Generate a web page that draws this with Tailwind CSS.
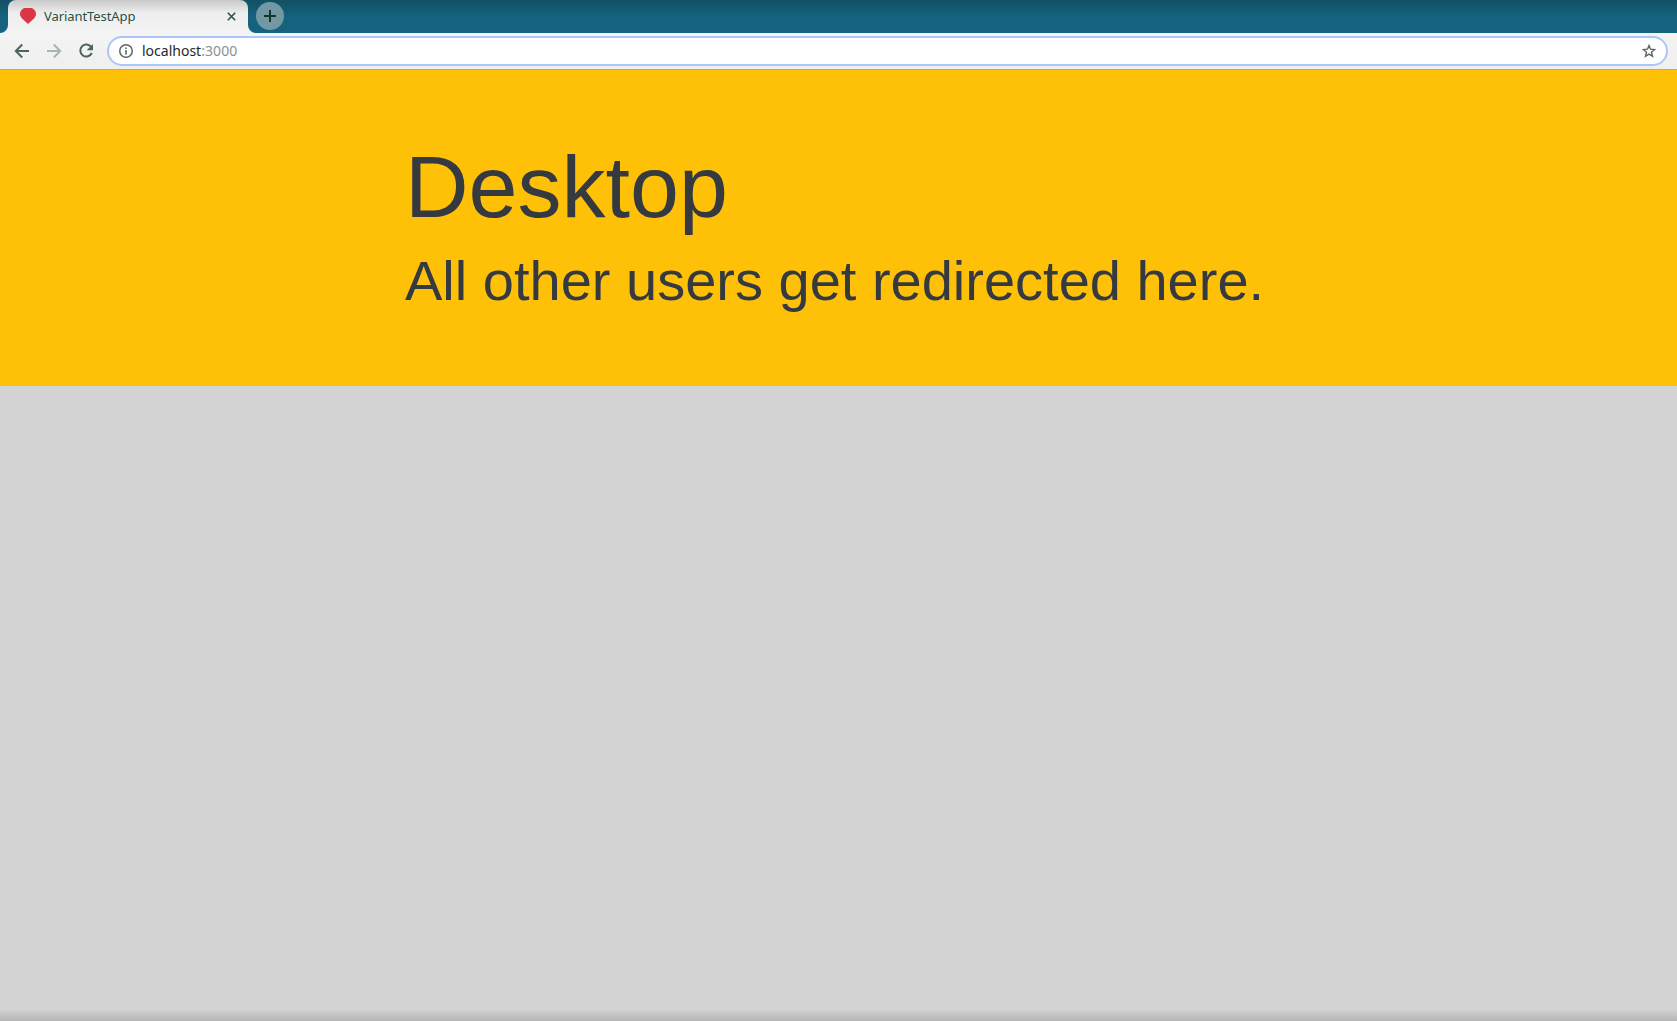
<!DOCTYPE html>
<html lang="en">
<head>
<meta charset="utf-8">
<title>VariantTestApp</title>
<script src="https://cdn.jsdelivr.net/npm/@tailwindcss/browser@4"></script>
</head>
<body class="flex h-screen flex-col overflow-hidden bg-[#d3d3d3] font-['Liberation_Sans',sans-serif]">
  <header class="shrink-0 font-['Noto_Sans',sans-serif]">
    <div class="flex h-[33px] bg-linear-to-b from-[#125064] via-[#14627d] via-50% to-[#14637f]">
      <div class="flex w-2 items-end bg-linear-to-b from-transparent from-60% to-[#f3f3f3] to-60%"><div class="h-full w-full rounded-br-[8px] bg-linear-to-b from-[#125064] via-[#14627d] via-50% to-[#14637f]"></div></div>
      <div class="flex w-60 items-center rounded-t-[8px] bg-linear-to-b from-[#c9c9c9] via-[#eeeeee] via-40% to-[#f4f4f4] pr-3 pb-px pl-3">
        <svg class="h-4 w-4 shrink-0" viewBox="0 0 16 16" fill="#dc3545"><path d="M4.2 0H11.8C14.3 1.2 16 3.3 16 6C16 8.4 14.5 10 12.6 11.8L8 16L3.4 11.8C1.5 10 0 8.4 0 6C0 3.3 1.7 1.2 4.2 0Z"/></svg>
        <span class="ml-2 grow pb-px text-[13px] leading-4 tracking-[-0.08px] text-[#285048]">VariantTestApp</span>
        <svg class="h-[9px] w-[9px] shrink-0" viewBox="0 0 9 9" fill="none" stroke="#315049" stroke-width="1.6"><path d="M.8.8L8.2 8.2M8.2.8L.8 8.2"/></svg>
      </div>
      <div class="w-2 bg-linear-to-b from-transparent from-60% to-[#f3f3f3] to-60%"><div class="h-full w-full rounded-bl-[8px] bg-linear-to-b from-[#125064] via-[#14627d] via-50% to-[#14637f]"></div></div>
      <div class="mt-0.5 flex h-7 w-7 items-center justify-center rounded-full bg-[#7298a4]">
        <svg class="h-3 w-3" viewBox="0 0 12 12" fill="none" stroke="#17342f" stroke-width="2"><path d="M6 0V12M0 6H12"/></svg>
      </div>
    </div>
    <div class="flex h-[37px] items-center border-b border-[#aaabad] bg-linear-to-b from-[#f4f4f4] to-[#efefef] pr-[9px] pl-[14px]">
      <svg class="h-4 w-4 shrink-0" viewBox="0 0 16 16" fill="none" stroke="#4d635d" stroke-width="2"><path d="M15 8H2.5M8.2 1.5L1.8 8L8.2 14.5"/></svg>
      <svg class="ml-4 h-4 w-4 shrink-0" viewBox="0 0 16 16" fill="none" stroke="#a9b3b0" stroke-width="2"><path d="M1 8H13.5M7.8 1.5L14.2 8L7.8 14.5"/></svg>
      <svg class="ml-4 h-4 w-4 shrink-0" viewBox="0 0 16 16"><path d="M13.3 4.2A6 6 0 1 0 13.8 10" fill="none" stroke="#4d635d" stroke-width="2"/><path d="M15 1V7.3H8.7Z" fill="#4d635d"/></svg>
      <div class="ml-[13px] flex h-[30px] grow items-center rounded-full border-2 border-[#acc7f7] bg-white pr-[10px] pl-[10px]">
        <svg class="h-[14px] w-[14px] shrink-0" viewBox="0 0 14 14"><circle cx="7" cy="7" r="6.25" fill="none" stroke="#5f6368" stroke-width="1.5"/><path d="M6.2 3.4H7.8V4.9H6.2ZM6.2 6.1H7.8V10.5H6.2Z" fill="#5f6368"/></svg>
        <span class="ml-[9px] grow text-[14px] leading-5 text-[#26292c]">localhost<span class="tracking-[0.1px] text-[#8d9094]">:3000</span></span>
        <svg class="h-[14px] w-[14px] shrink-0" viewBox="0 0 14 14" fill="none" stroke="#5f6368" stroke-width="1.4"><path d="M7 1.5L8.5 5.2L12.6 5.5L9.5 8.2L10.5 12.3L7 10.1L3.5 12.3L4.5 8.2L1.4 5.5L5.5 5.2Z"/></svg>
      </div>
    </div>
  </header>
  <main class="flex grow flex-col">
    <section class="h-[316px] bg-[#ffc107] pt-16 pl-[405px] text-[#343a40]">
      <h1 class="text-[88px] leading-[1.2]">Desktop</h1>
      <h2 class="mt-[7px] text-[56px] leading-[1.2]">All other users get redirected here.</h2>
    </section>
    <div class="mt-auto h-3 bg-linear-to-b from-[#d3d3d3] to-[#b5b5b5]"></div>
  </main>
</body>
</html>
